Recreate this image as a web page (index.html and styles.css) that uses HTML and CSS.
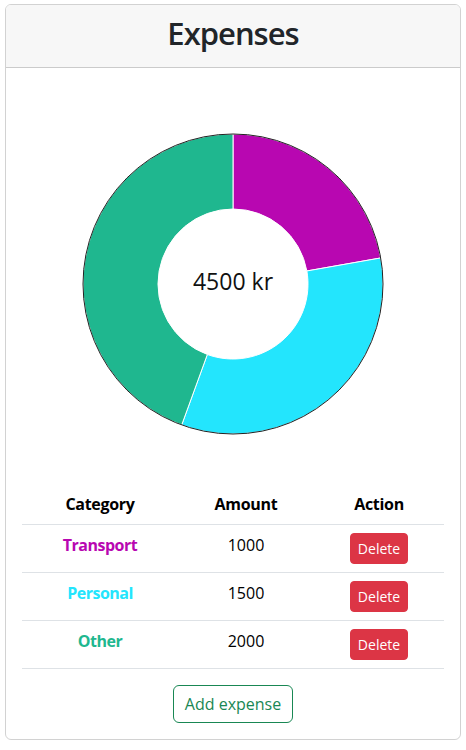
FILE: index.html
```html
<!DOCTYPE html>
<html lang="en">
<head>
<meta charset="utf-8">
<title>Expenses</title>
<link rel="stylesheet" href="styles.css">
</head>
<body>
<div class="card">
  <div class="card-header"><h2 class="title">Expenses</h2></div>
  <div class="card-body">
    <div class="chart">
      <div class="donut">
        <svg width="300" height="300" viewBox="0 0 300 300" class="donut-svg">
          <path d="M150 0 A150 150 0 0 1 297.72 123.95 L223.86 136.98 A75 75 0 0 0 150 75 Z" fill="#b807b1" stroke="#ffffff" stroke-width="1"/>
          <path d="M297.72 123.95 A150 150 0 0 1 98.70 290.95 L124.35 220.48 A75 75 0 0 0 223.86 136.98 Z" fill="#23e5fd" stroke="#ffffff" stroke-width="1"/>
          <path d="M98.70 290.95 A150 150 0 0 1 150 0 L150 75 A75 75 0 0 0 124.35 220.48 Z" fill="#1fb78f" stroke="#ffffff" stroke-width="1"/>
          <circle cx="150" cy="150" r="150" fill="none" stroke="#222" stroke-width="1"/>
        </svg>
        <div class="total">4500 kr</div>
      </div>
    </div>
    <table class="table">
      <thead>
        <tr><th class="c1">Category</th><th class="c2">Amount</th><th class="c3">Action</th></tr>
      </thead>
      <tbody>
        <tr><td class="cat transport">Transport</td><td>1000</td><td><button class="btn-del">Delete</button></td></tr>
        <tr><td class="cat personal">Personal</td><td>1500</td><td><button class="btn-del">Delete</button></td></tr>
        <tr><td class="cat other">Other</td><td>2000</td><td><button class="btn-del">Delete</button></td></tr>
      </tbody>
    </table>
    <div class="actions"><button class="btn-add">Add expense</button></div>
  </div>
</div>
</body>
</html>
```
FILE: styles.css
```css
* { box-sizing: border-box; }
body {
  margin: 0;
  font-family: "Open Sans", "Noto Sans", sans-serif;
  font-size: 16px;
  line-height: 1.5;
  color: #212529;
  background: #fff;
}
.card {
  margin: 4px 5px 0 5px;
  border: 1px solid rgba(0,0,0,0.175);
  border-radius: 6px;
  overflow: hidden;
}
.card-header {
  background: #f7f7f7;
  border-bottom: 1px solid rgba(0,0,0,0.175);
  height: 63px;
  padding-top: 10px;
  text-align: center;
}
.title {
  margin: 0;
  font-size: 31px;
  font-weight: 600;
  letter-spacing: -1px;
  line-height: 36px;
  color: #212529;
}
.card-body {
  padding: 16px;
}
.chart {
  height: 400px;
  display: flex;
  align-items: center;
  justify-content: center;
}
.donut {
  position: relative;
  width: 300px;
  height: 300px;
}
.donut-svg { display: block; overflow: visible; }
.total {
  position: absolute;
  inset: 0;
  display: flex;
  align-items: center;
  justify-content: center;
  padding-bottom: 5px;
  font-size: 23px;
  color: #111;
}
.table {
  width: 100%;
  border-collapse: collapse;
  text-align: center;
  color: #000;
}
.table th, .table td {
  padding: 8px;
  vertical-align: top;
  border-bottom: 1px solid #dee2e6;
}
.table th { font-weight: 700; letter-spacing: -0.3px; vertical-align: bottom; }
.c1 { width: 156px; }
.c2 { width: 136px; }
.c3 { width: 130px; }
.cat { font-weight: 700; letter-spacing: -0.5px; }
.transport { color: #b807b1; }
.personal { color: #23e5fd; }
.other { color: #1fb78f; }
.btn-del {
  font-family: inherit;
  font-size: 14px;
  line-height: 1.5;
  padding: 4px 7px;
  color: #fff;
  background: #dc3545;
  border: 1px solid #dc3545;
  border-radius: 4px;
}
.actions {
  display: flex;
  justify-content: center;
  margin-top: 16px;
}
.btn-add {
  font-family: inherit;
  font-size: 16px;
  line-height: 1.5;
  padding: 6px 11px;
  color: #198754;
  background: #fff;
  border: 1px solid #198754;
  border-radius: 6px;
}
```
